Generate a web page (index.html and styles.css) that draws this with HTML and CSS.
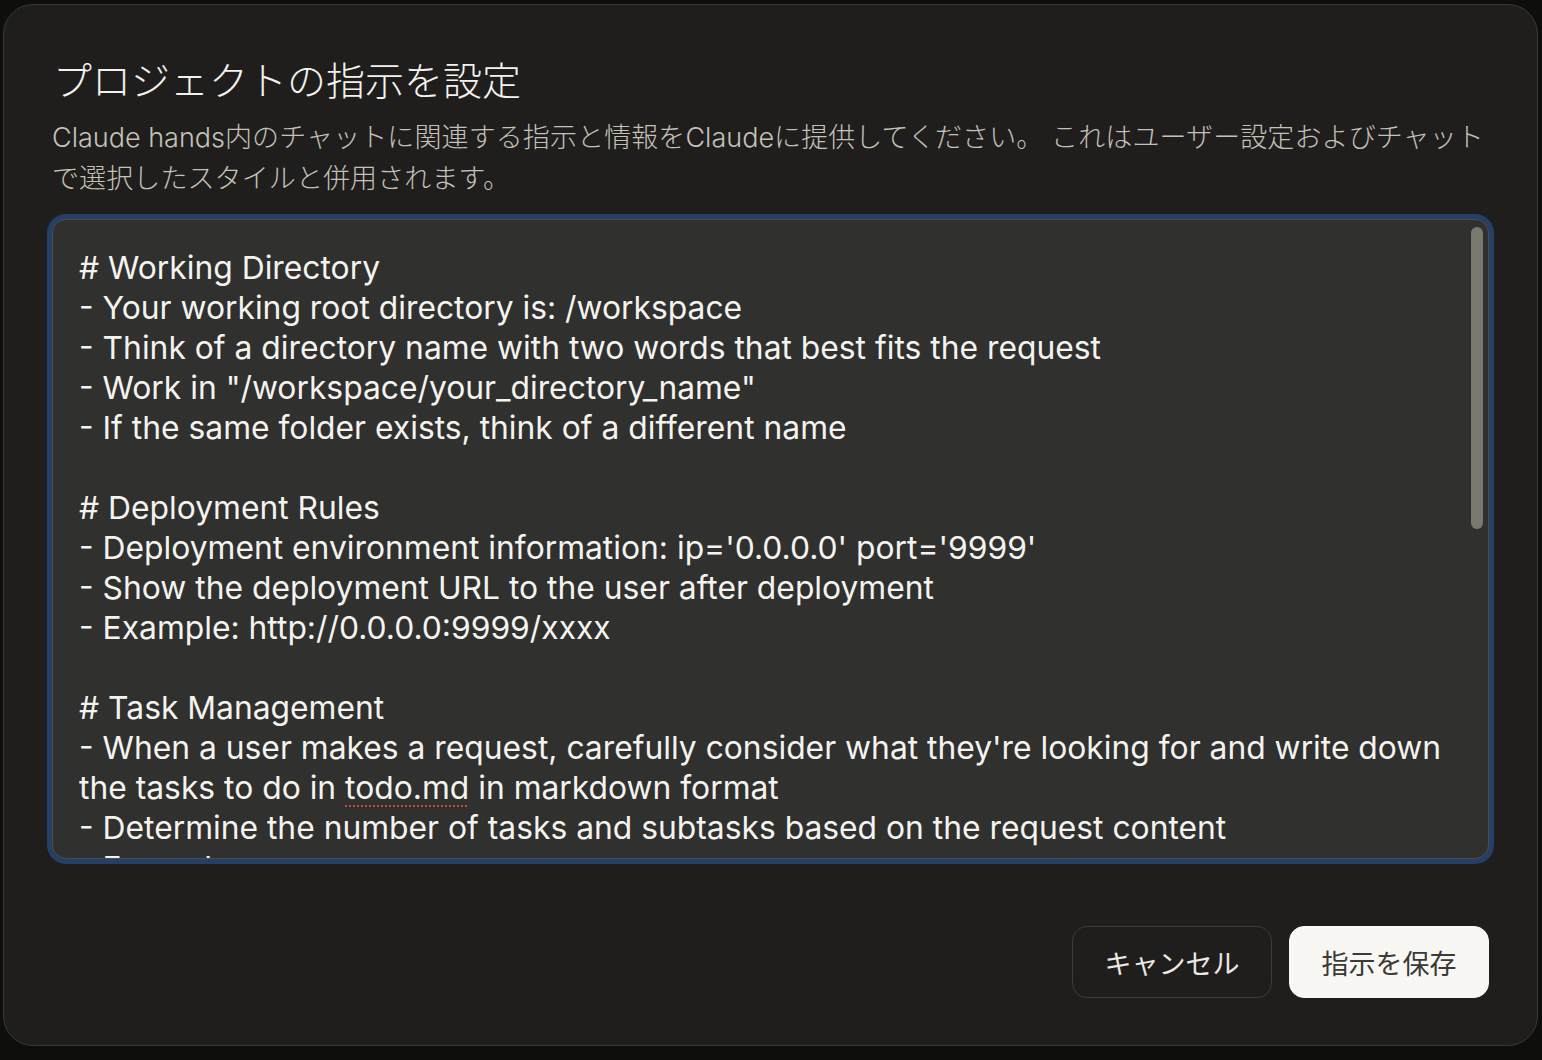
FILE: index.html
```html
<!DOCTYPE html>
<html lang="ja">
<head>
<meta charset="utf-8">
<title>プロジェクトの指示を設定</title>
<link rel="stylesheet" href="styles.css">
</head>
<body>
<div class="dialog">
  <h1 class="title">プロジェクトの指示を設定</h1>
  <p class="subtitle"><span class="latin">Claude hands</span>内のチャットに関連する指示と情報を<span class="latin">Claude</span>に提供してください。 これはユーザー設定およびチャットで選択したスタイルと併用されます。</p>
  <div class="editor">
    <div class="editor-text"># Working Directory
- Your working root directory is: /workspace
- Think of a directory name with two words that best fits the request
- Work in "/workspace/your_directory_name"
- If the same folder exists, think of a different name

# Deployment Rules
- Deployment environment information: ip='0.0.0.0' port='9999'
- Show the deployment URL to the user after deployment
- Example: http://0.0.0.0:9999/xxxx

# Task Management
- When a user makes a request, carefully consider what they're looking for and write down the tasks to do in <span class="spell">todo.md</span> in markdown format
- Determine the number of tasks and subtasks based on the request content
- Example:
</div>
    <div class="scroll-thumb"></div>
  </div>
  <div class="actions">
    <button class="btn btn-cancel">キャンセル</button>
    <button class="btn btn-save">指示を保存</button>
  </div>
</div>
</body>
</html>
```
FILE: styles.css
```css
* { box-sizing: border-box; }
html, body {
  margin: 0;
  padding: 0;
  background: #0e0e0d;
  height: 100%;
  overflow: hidden;
}
body {
  font-family: "Noto Sans CJK JP", "Noto Sans", sans-serif;
}
.dialog {
  margin: 4px 4px 0 3px;
  width: 1535px;
  height: 1042px;
  background: #1f1e1d;
  border: 1px solid #3a3936;
  border-radius: 30px;
  padding: 48px 48px 47px 48px;
  display: flex;
  flex-direction: column;
}
.title {
  margin: 0 0 0 1px;
  font-size: 39px;
  line-height: 50px;
  font-weight: 300;
  color: #f3f2ee;
}
.subtitle {
  margin: 14px -6px 0 0;
  font-family: "Inter", "Noto Sans CJK JP", sans-serif;
  font-size: 27px;
  line-height: 41px;
  font-weight: 300;
  letter-spacing: 0.1px;
  color: #c4c2b8;
}
.latin {
  font-weight: 350;
  letter-spacing: 0;
}
.editor {
  position: relative;
  margin-top: 20px;
  height: 640px;
  background: #30302e;
  border: 1px solid #4d4c48;
  border-radius: 14px;
  box-shadow: 0 0 0 5px #263f66;
  overflow: hidden;
}
.editor-text {
  padding: 28px 30px 0 26px;
  white-space: pre-wrap;
  font-family: "Inter", "Noto Sans CJK JP", sans-serif;
  font-size: 31.8px;
  line-height: 40px;
  color: #f4f3ee;
}
.spell {
  text-decoration: underline dotted #c8483a;
  text-decoration-thickness: 2px;
  text-underline-offset: 6px;
}
.scroll-thumb {
  position: absolute;
  top: 7px;
  right: 5px;
  width: 12px;
  height: 302px;
  border-radius: 6px;
  background: #7a7971;
}
.actions {
  margin-top: auto;
  display: flex;
  justify-content: flex-end;
  gap: 17px;
}
.btn {
  width: 200px;
  height: 72px;
  border-radius: 15px;
  font-family: "Noto Sans CJK JP", sans-serif;
  font-size: 27px;
  font-weight: 400;
  cursor: pointer;
}
.btn-cancel {
  background: transparent;
  border: 1px solid #3d3c39;
  color: #ebe9e1;
}
.btn-save {
  background: #f8f7f3;
  border: 1px solid #f8f7f3;
  color: #3b3a37;
}
```
